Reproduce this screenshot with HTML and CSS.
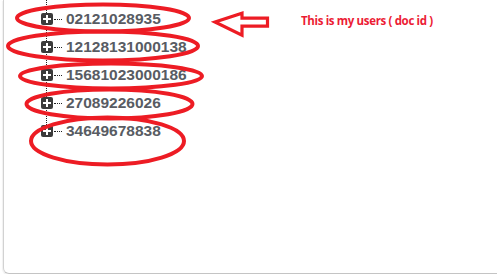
FILE: index.html
```html
<!DOCTYPE html>
<html>
<head>
<meta charset="utf-8">
<title>users tree</title>
<link rel="stylesheet" href="styles.css">
</head>
<body>
<div class="panel">
  <ul class="tree">
    <li class="node"><span class="toggle"></span><span class="dots"></span><span class="label">02121028935</span></li>
    <li class="node"><span class="toggle"></span><span class="dots"></span><span class="label">12128131000138</span></li>
    <li class="node"><span class="toggle"></span><span class="dots"></span><span class="label">15681023000186</span></li>
    <li class="node"><span class="toggle"></span><span class="dots"></span><span class="label">27089226026</span></li>
    <li class="node"><span class="toggle"></span><span class="dots"></span><span class="label">34649678838</span></li>
  </ul>
</div>

<!-- paint annotations on top of the screenshot -->
<svg class="marks" width="497" height="275" viewBox="0 0 497 275">
  <g fill="none" stroke="#ed1c24" stroke-width="4">
    <ellipse cx="103" cy="18" rx="86" ry="13.5"/>
    <ellipse cx="103" cy="46" rx="95" ry="14.5"/>
    <ellipse cx="111" cy="76" rx="91" ry="12.5"/>
    <ellipse cx="109.5" cy="104" rx="83" ry="14.5"/>
    <ellipse cx="107.5" cy="141" rx="76.5" ry="23.5"/>
    <polygon stroke-width="3.2" stroke-linejoin="miter" points="215,22 242,13.2 242,18.2 267.5,18.2 267.5,26.2 242,26.2 242,35.2"/>
  </g>
</svg>
<div class="note">This is my users ( doc id )</div>
</body>
</html>
```

FILE: styles.css
```css
body {
  margin: 0;
  background: white;
  font-family: "Liberation Sans", Arial, sans-serif;
}

.panel {
  margin-left: 3px;
  height: 273px;
  border-left: 1px solid #d2d2d2;
  border-bottom: 1px solid #c4c4c4;
  border-bottom-left-radius: 6px;
  box-shadow: -1px 1px 1px rgba(0,0,0,0.06);
}

.tree {
  margin: 0;
  padding: 5px 0 0 37px;
  list-style: none;
  background-image: repeating-linear-gradient(to bottom, #222 0 1px, transparent 1px 2px);
  background-size: 1px 125px;
  background-position: 42px 0;
  background-repeat: no-repeat;
}

.node {
  display: flex;
  align-items: center;
  height: 28px;
}

.toggle {
  position: relative;
  width: 12px;
  height: 12px;
  border-radius: 2px;
  background: #3b3b3b;
  flex: none;
}
.toggle::before,
.toggle::after {
  content: "";
  position: absolute;
  background: white;
}
.toggle::before {
  left: 2px;
  top: 5px;
  width: 8px;
  height: 2px;
}
.toggle::after {
  left: 5px;
  top: 2px;
  width: 2px;
  height: 8px;
}

.dots {
  width: 8px;
  margin-left: 1px;
  border-top: 1px dotted #222;
}

.label {
  margin-left: 4px;
  font-weight: bold;
  font-size: 15.5px;
  color: #585c63;
}

.marks {
  position: absolute;
  left: 0;
  top: 0;
}

.note {
  position: absolute;
  left: 301px;
  top: 13px;
  font-family: "Open Sans", sans-serif;
  font-weight: bold;
  font-size: 11.5px;
  letter-spacing: -0.35px;
  color: #ec1c34;
}
```
